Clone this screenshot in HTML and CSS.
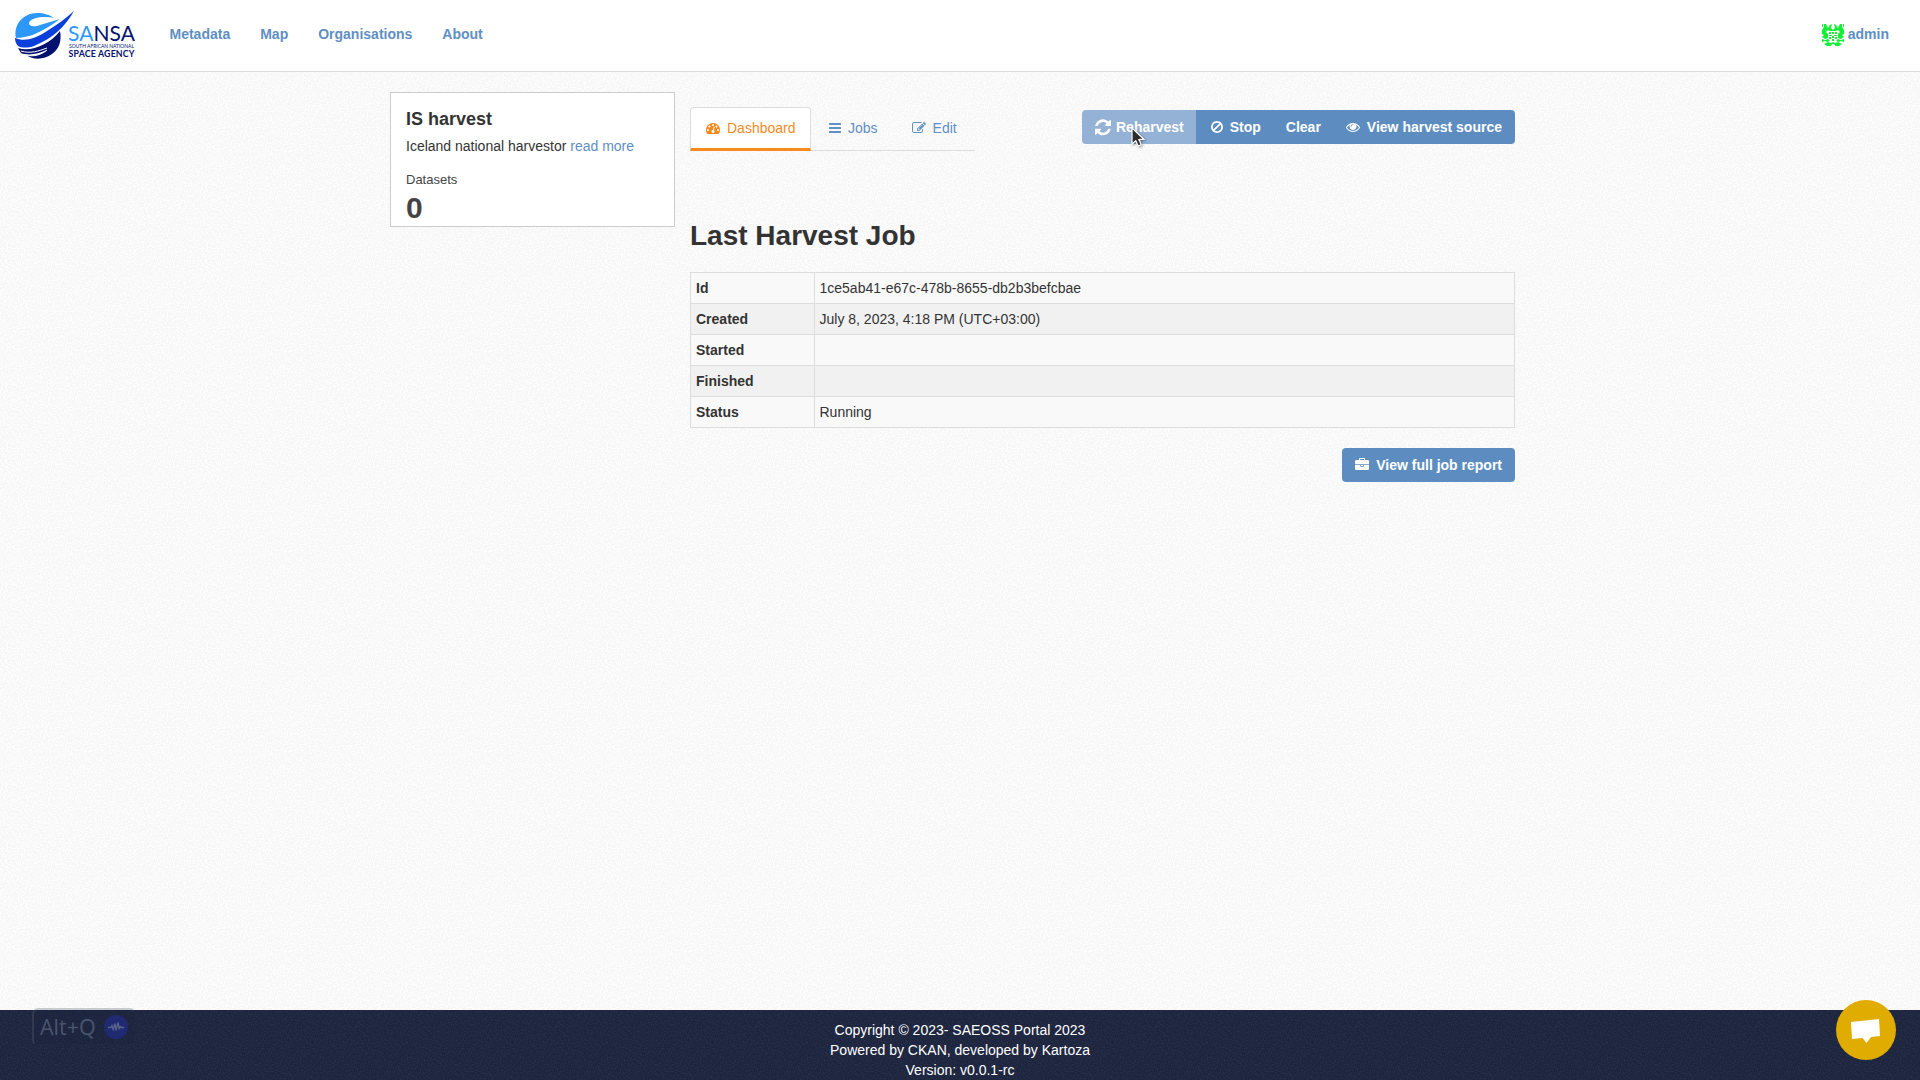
FILE: index.html
```html
<!DOCTYPE html>
<html lang="en">
<head>
<meta charset="utf-8">
<title>IS harvest - SAEOSS Portal</title>
<link rel="stylesheet" href="styles.css">
</head>
<body>
<header class="masthead">
  <a class="logo" href="#">
    <svg width="122" height="52" viewBox="13 8 122 52">
      <path fill="#2c98fb" d="M16 38C13 24 24 13 37 13c7 0 13 2 17 5-9-2-23-1-25 5 0 4 7 4 11 2L60 19C52 25 38 34 29 36c-5 1-9 2-13 2z"/>
      <path fill="#0a3fdc" d="M74 11C65 27 53 38 34 46c-6 2-12 2-16 0-2-2-3-5-3-8 9 4 20 1 32-7C57 25 66 18 74 11z"/>
      <path fill="#03116f" d="M60 31c2 10-1 18-8 23-8 6-19 6-26 1 8 2 17-1 21-5-9 4-19 6-26 3l-3-5c12 4 30-2 42-17z"/>
      <path fill="none" stroke="#fff" stroke-width="1" d="M21 51c9 3 18 0 26-3M26 55c8 2 15 0 21-5"/>
      <g fill="#03116f">
        <text class="logo-name" x="68" y="41" textLength="67" lengthAdjust="spacing"><tspan fill="#2c98fb">SA</tspan>NSA</text>
        <text class="logo-small" x="69" y="47.800" textLength="65" lengthAdjust="spacing">SOUTH AFRICAN NATIONAL</text>
        <text class="logo-agency" x="68.500" y="56.600" textLength="66" lengthAdjust="spacing">SPACE AGENCY</text>
      </g>
    </svg>
  </a>
  <nav class="nav">
    <a href="#">Metadata</a><a href="#">Map</a><a href="#">Organisations</a><a href="#">About</a>
  </nav>
  <a class="account" href="#">
    <svg width="22" height="22" viewBox="0 0 22 22">
      <g id="half" fill="#16ee36">
        <path d="M2 0h2l2 4 2-3 2-1-1 4 2 2v1H8L6 6 4 8l2 2v4l-3 1-3-2 2-2-2-1V6l2-3zM0 0h1v2L0 4zM0 15l3 1 3-1 2 2-3 1-2-1-3 1zM2 20l4-2 3 1 2-1v2l-2 1v1H5z"/>
        <path d="M7 8h2v2H7zM10 8h1v2h-1zM7 11h3v1H7zM10 12h1v2h-1zM7 13h2v2H7zM10 15h1v2h-1z"/>
      </g>
      <use href="#half" transform="translate(22 0) scale(-1 1)"/>
    </svg>
    admin
  </a>
</header>

<main class="container">
  <aside class="card">
    <h1>IS harvest</h1>
    <p>Iceland national harvestor <a href="#">read more</a></p>
    <dl><dt>Datasets</dt><dd>0</dd></dl>
  </aside>
  <section class="content">
    <div class="page-header">
      <ul class="tabs">
        <li class="active"><a href="#"><svg class="icon" viewBox="0 0 1792 1792"><path d="M384 1152q0-53-37.500-90.500t-90.500-37.500-90.500 37.500-37.500 90.500 37.500 90.500 90.500 37.500 90.500-37.500 37.500-90.500zm192-448q0-53-37.500-90.500t-90.500-37.500-90.500 37.500-37.500 90.500 37.500 90.500 90.500 37.500 90.500-37.500 37.500-90.500zm428 481l101-382q6-26-7.500-48.500t-38.500-29.500-48 6.500-30 39.500l-101 382q-60 5-107 43.500t-63 98.500q-20 77 20 146t117 89 146-20 89-117q16-60-6-117t-72-91zm660-33q0-53-37.500-90.500t-90.500-37.500-90.500 37.500-37.500 90.500 37.500 90.500 90.500 37.500 90.500-37.500 37.500-90.500zm-640-640q0-53-37.500-90.500t-90.500-37.500-90.500 37.500-37.500 90.500 37.500 90.500 90.500 37.500 90.500-37.500 37.500-90.500zm448 192q0-53-37.500-90.500t-90.500-37.500-90.500 37.500-37.500 90.500 37.500 90.500 90.500 37.500 90.500-37.500 37.500-90.500zm320 448q0 261-141 483-19 29-54 29h-1402q-35 0-54-29-141-221-141-483 0-182 71-348t191-286 286-191 348-71 348 71 286 191 191 286 71 348z"/></svg>Dashboard</a></li>
        <li><a href="#"><svg class="icon bars" viewBox="128 0 1536 1792"><path d="M1664 1344v128q0 26-19 45t-45 19h-1408q-26 0-45-19t-19-45v-128q0-26 19-45t45-19h1408q26 0 45 19t19 45zm0-512v128q0 26-19 45t-45 19h-1408q-26 0-45-19t-19-45v-128q0-26 19-45t45-19h1408q26 0 45 19t19 45zm0-512v128q0 26-19 45t-45 19h-1408q-26 0-45-19t-19-45v-128q0-26 19-45t45-19h1408q26 0 45 19t19 45z"/></svg>Jobs</a></li>
        <li class="edit"><a href="#"><svg class="icon" viewBox="0 0 1792 1792"><path d="M888 1184l116-116-152-152-116 116v56h96v96h56zm440-720q-16-16-33 1l-350 350q-17 17-1 33t33-1l350-350q17-17 1-33zm80 594v190q0 119-84.500 203.500t-203.500 84.500h-832q-119 0-203.500-84.500t-84.500-203.500v-832q0-119 84.500-203.500t203.500-84.500h832q63 0 117 25 15 7 18 23 3 17-9 29l-49 49q-14 14-32 8-23-6-45-6h-832q-66 0-113 47t-47 113v832q0 66 47 113t113 47h832q66 0 113-47t47-113v-126q0-13 9-22l64-64q15-15 35-7t20 29zm-96-738l288 288-672 672h-288v-288zm444 132l-92 92-288-288 92-92q28-28 68-28t68 28l152 152q28 28 28 68t-28 68z"/></svg>Edit</a></li>
      </ul>
      <div class="actions">
        <a class="btn faded" href="#"><svg class="icon large" viewBox="128 0 1536 1792"><path d="M1639 1056q0 5-1 7-64 268-268 434.500t-478 166.500q-146 0-282.500-55t-243.500-157l-129 129q-19 19-45 19t-45-19-19-45v-448q0-26 19-45t45-19h448q26 0 45 19t19 45-19 45l-137 137q71 66 161 102t187 36q134 0 250-65t186-179q11-17 53-117 8-23 30-23h192q13 0 22.500 9.500t9.500 22.500zm25-800v448q0 26-19 45t-45 19h-448q-26 0-45-19t-19-45 19-45l138-138q-148-137-349-137-134 0-250 65t-186 179q-11 17-53 117-8 23-30 23h-199q-13 0-22.500-9.500t-9.500-22.500v-7q65-268 270-434.500t480-166.500q146 0 284 55.500t245 156.500l130-129q19-19 45-19t45 19 19 45z"/></svg>Reharvest</a>
        <a class="btn stop" href="#"><svg class="icon ban" viewBox="128 0 1536 1792"><path d="M1440 893q0-161-87-295l-754 753q137 89 297 89 111 0 211.500-43.500t173.500-116.500 116-174.500 43-212.500zm-999 299l755-754q-135-91-300-91-148 0-273 73t-198 199-73 274q0 162 89 299zm1223-299q0 157-61 300t-163.500 246-245 164-298.500 61-298.500-61-245-164-163.500-246-61-300 61-299.500 163.500-245.500 245-164 298.500-61 298.500 61 245 164 163.500 245.500 61 299.500z"/></svg>Stop</a>
        <a class="btn" href="#">Clear</a>
        <a class="btn view" href="#"><svg class="icon" viewBox="0 0 1792 1792"><path d="M1664 960q-152-236-381-353 61 104 61 225 0 185-131.500 316.500t-316.500 131.500-316.500-131.500-131.500-316.500q0-121 61-225-229 117-381 353 133 205 333.500 326.500t434.500 121.500 434.500-121.500 333.500-326.500zm-720-384q0-20-14-34t-34-14q-125 0-214.500 89.500t-89.500 214.500q0 20 14 34t34 14 34-14 14-34q0-86 61-147t147-61q20 0 34-14t14-34zm848 384q0 34-20 69-140 230-376.500 368.500t-499.500 138.500-499.500-139-376.500-368q-20-35-20-69t20-69q140-229 376.500-368t499.500-139 499.500 139 376.500 368q20 35 20 69z"/></svg>View harvest source</a>
      </div>
    </div>
    <h2>Last Harvest Job</h2>
    <table class="job">
      <tr><th>Id</th><td>1ce5ab41-e67c-478b-8655-db2b3befcbae</td></tr>
      <tr><th>Created</th><td>July 8, 2023, 4:18 PM (UTC+03:00)</td></tr>
      <tr><th>Started</th><td></td></tr>
      <tr><th>Finished</th><td></td></tr>
      <tr><th>Status</th><td>Running</td></tr>
    </table>
    <div class="report">
      <a class="btn rounded" href="#"><svg class="icon" viewBox="0 0 1792 1792"><path d="M640 256h512v-128h-512v128zm1152 640v480q0 66-47 113t-113 47h-1472q-66 0-113-47t-47-113v-480h672v160q0 26 19 45t45 19h320q26 0 45-19t19-45v-160h672zm-768 0v128h-256v-128h256zm768-480v384h-1792v-384q0-66 47-113t113-47h352v-160q0-40 28-68t68-28h576q40 0 68 28t28 68v160h352q66 0 113 47t47 113z"/></svg>View full job report</a>
    </div>
  </section>
</main>

<footer class="footer">
  <p>Copyright © 2023- SAEOSS Portal 2023</p>
  <p>Powered by CKAN, developed by Kartoza</p>
  <p>Version: v0.0.1-rc</p>
</footer>

<div class="hotkey">
  <span>Alt+Q</span>
  <svg width="24" height="24" viewBox="0 0 24 24"><circle cx="12" cy="12" r="12" fill="#202a72"/><path d="M4 12.500h3l1-2 1.200 4 1.800-6 1 7 2-8 1.200 6 1-2 1 1h3" fill="none" stroke="#5b6488" stroke-width="1.300"/></svg>
</div>
<button class="chat" aria-label="Chat">
  <svg width="60" height="60" viewBox="0 0 60 60"><path fill="#fff" d="M15 22l28-3 1 17-9 1-4.500 6-4-5L16 39z"/></svg>
</button>
<svg class="cursor" width="16" height="22" viewBox="0 0 16 22"><path d="M1 1v16l3.800-3.300L7.200 19l3-1.300-2.300-5.100 5-.4z" fill="#2b2b2b" stroke="#fff" stroke-width="1.200"/></svg>
</body>
</html>
```
FILE: styles.css
```css
* { box-sizing: border-box; }

:root {
  --grain: url("data:image/svg+xml,%3Csvg xmlns='http://www.w3.org/2000/svg' width='200' height='200'%3E%3Cfilter id='n' x='0' y='0' width='100%25' height='100%25'%3E%3CfeTurbulence type='fractalNoise' baseFrequency='.7' numOctaves='2' stitchTiles='stitch'/%3E%3CfeColorMatrix values='0 0 0 0 1 0 0 0 0 1 0 0 0 0 1 3 0 0 0 -1.2'/%3E%3C/filter%3E%3Crect width='200' height='200' filter='url(%23n)'/%3E%3C/svg%3E");
  --grain-dark: url("data:image/svg+xml,%3Csvg xmlns='http://www.w3.org/2000/svg' width='200' height='200'%3E%3Cfilter id='n' x='0' y='0' width='100%25' height='100%25'%3E%3CfeTurbulence type='fractalNoise' baseFrequency='.7' numOctaves='2' stitchTiles='stitch'/%3E%3CfeColorMatrix values='0 0 0 0 1 0 0 0 0 1 0 0 0 0 1 .14 0 0 0 -.055'/%3E%3C/filter%3E%3Crect width='200' height='200' filter='url(%23n)'/%3E%3C/svg%3E");
}

body {
  margin: 0;
  height: 1080px;
  overflow: hidden;
  display: flex;
  flex-direction: column;
  background: #f6f6f6 var(--grain);
  color: #333;
  font: 14px/20px "Liberation Sans", Arial, sans-serif;
}

a { color: #5f8fc4; text-decoration: none; }
h1, h2, p, ul, dl, dd { margin: 0; padding: 0; }

.masthead {
  flex: none;
  height: 72px;
  display: flex;
  align-items: flex-start;
  padding: 0 31px 0 15px;
  background: #fff;
  border-bottom: 1px solid #ddd;
  font-weight: bold;
}
.logo { display: block; width: 155px; height: 52px; margin-top: 8px; margin-left: -2px; }
.logo svg { display: block; }
.logo-name { font: 21px Lato, sans-serif; }
.logo-small { font: 5px Lato, sans-serif; }
.logo-agency { font: bold 8.800px Lato, sans-serif; }
.nav { display: flex; gap: 30px; margin: 24px 0 0 1.500px; }
.account { display: flex; gap: 4px; margin: 24px 0 0 auto; }

.container { flex: 1; width: 1125px; margin: 20px 0 0 390px; display: flex; align-items: flex-start; gap: 15px; }
.card {
  width: 285px;
  height: 135px;
  padding: 16px 15px 0;
  background: #fff;
  border: 1px solid #ccc;
}
.card h1 { font-size: 18px; line-height: 20px; margin-bottom: 7px; }
.card dl { margin-top: 15px; color: #444; }
.card dt { font-size: 13px; line-height: 18px; }
.card dd { font-size: 30px; line-height: 30px; font-weight: bold; margin-top: 4px; }

.content { width: 825px; }
.page-header { display: flex; justify-content: space-between; height: 76px; padding-top: 15px; }
.tabs { display: flex; width: 285px; height: 44px; list-style: none; border-bottom: 1px solid #ddd; }
.tabs li { height: 44px; padding: 11px 16px 0; }
.tabs .edit { padding-left: 18px; }
.tabs .active {
  width: 121px;
  padding: 10px 15px 0;
  background: #fff;
  border: 1px solid #ddd;
  border-bottom: 3px solid #f58a1f;
  border-radius: 4px 4px 0 0;
}
.tabs a { display: flex; align-items: center; }
.tabs .active a { color: #f58a1f; }

.icon { flex: none; width: 14px; height: 14px; margin-right: 7px; fill: currentColor; }
.icon.bars { width: 12px; margin: 0 7px 0 2px; }
.icon.ban { width: 12px; }
.icon.large { width: 16px; height: 18.670px; margin-right: 5px; }

.actions { display: flex; height: 34px; margin-top: 3px; border-radius: 4px; overflow: hidden; }
.btn {
  display: flex;
  align-items: center;
  height: 34px;
  padding: 0 13px;
  background: #5d8dc0;
  color: #fff;
  font-weight: bold;
  white-space: nowrap;
}
.actions .stop { padding: 0 12px 0 15px; }
.actions .view { padding-left: 12px; }
.actions .faded { background: #94b2d5; padding-right: 12px; }
.rounded { border-radius: 4px; }

h2 { font-size: 28px; line-height: 32px; margin: 52px 0 20px; }
.job { width: 825px; border-collapse: collapse; table-layout: fixed; border: 1px solid #ddd; }
.job th, .job td { height: 31px; padding: 5px; border: 1px solid #ddd; text-align: left; }
.job td { padding-left: 4.500px; }
.job th { width: 124px; }
.job tr { background: #f9f9f9; }
.job tr:nth-child(even) { background: #f1f1f1; }
.report { display: flex; justify-content: flex-end; margin-top: 20px; }

.footer {
  flex: none;
  height: 70px;
  padding-top: 10px;
  background: #1c243e var(--grain-dark);
  color: #fff;
  text-align: center;
}

.hotkey {
  position: absolute;
  left: 32px;
  top: 1008px;
  width: 104px;
  height: 38px;
  display: flex;
  align-items: center;
  gap: 8px;
  padding-left: 6px;
  border: 2px solid rgba(90, 100, 110, .3);
  border-right-color: transparent;
  border-bottom-color: transparent;
  border-radius: 6px;
  background: rgba(28, 37, 60, .3);
  background-clip: padding-box;
  color: #4b546d;
  font: 21.500px/30px "Open Sans", sans-serif;
}
.chat {
  position: absolute;
  left: 1836px;
  top: 1000px;
  width: 60px;
  height: 60px;
  padding: 0;
  border: 0;
  border-radius: 50%;
  background: #e0ac00;
}
.chat svg { display: block; }
.cursor { position: absolute; left: 1131px; top: 127px; filter: drop-shadow(1px 1px 1px rgba(0, 0, 0, .4)); }
```
